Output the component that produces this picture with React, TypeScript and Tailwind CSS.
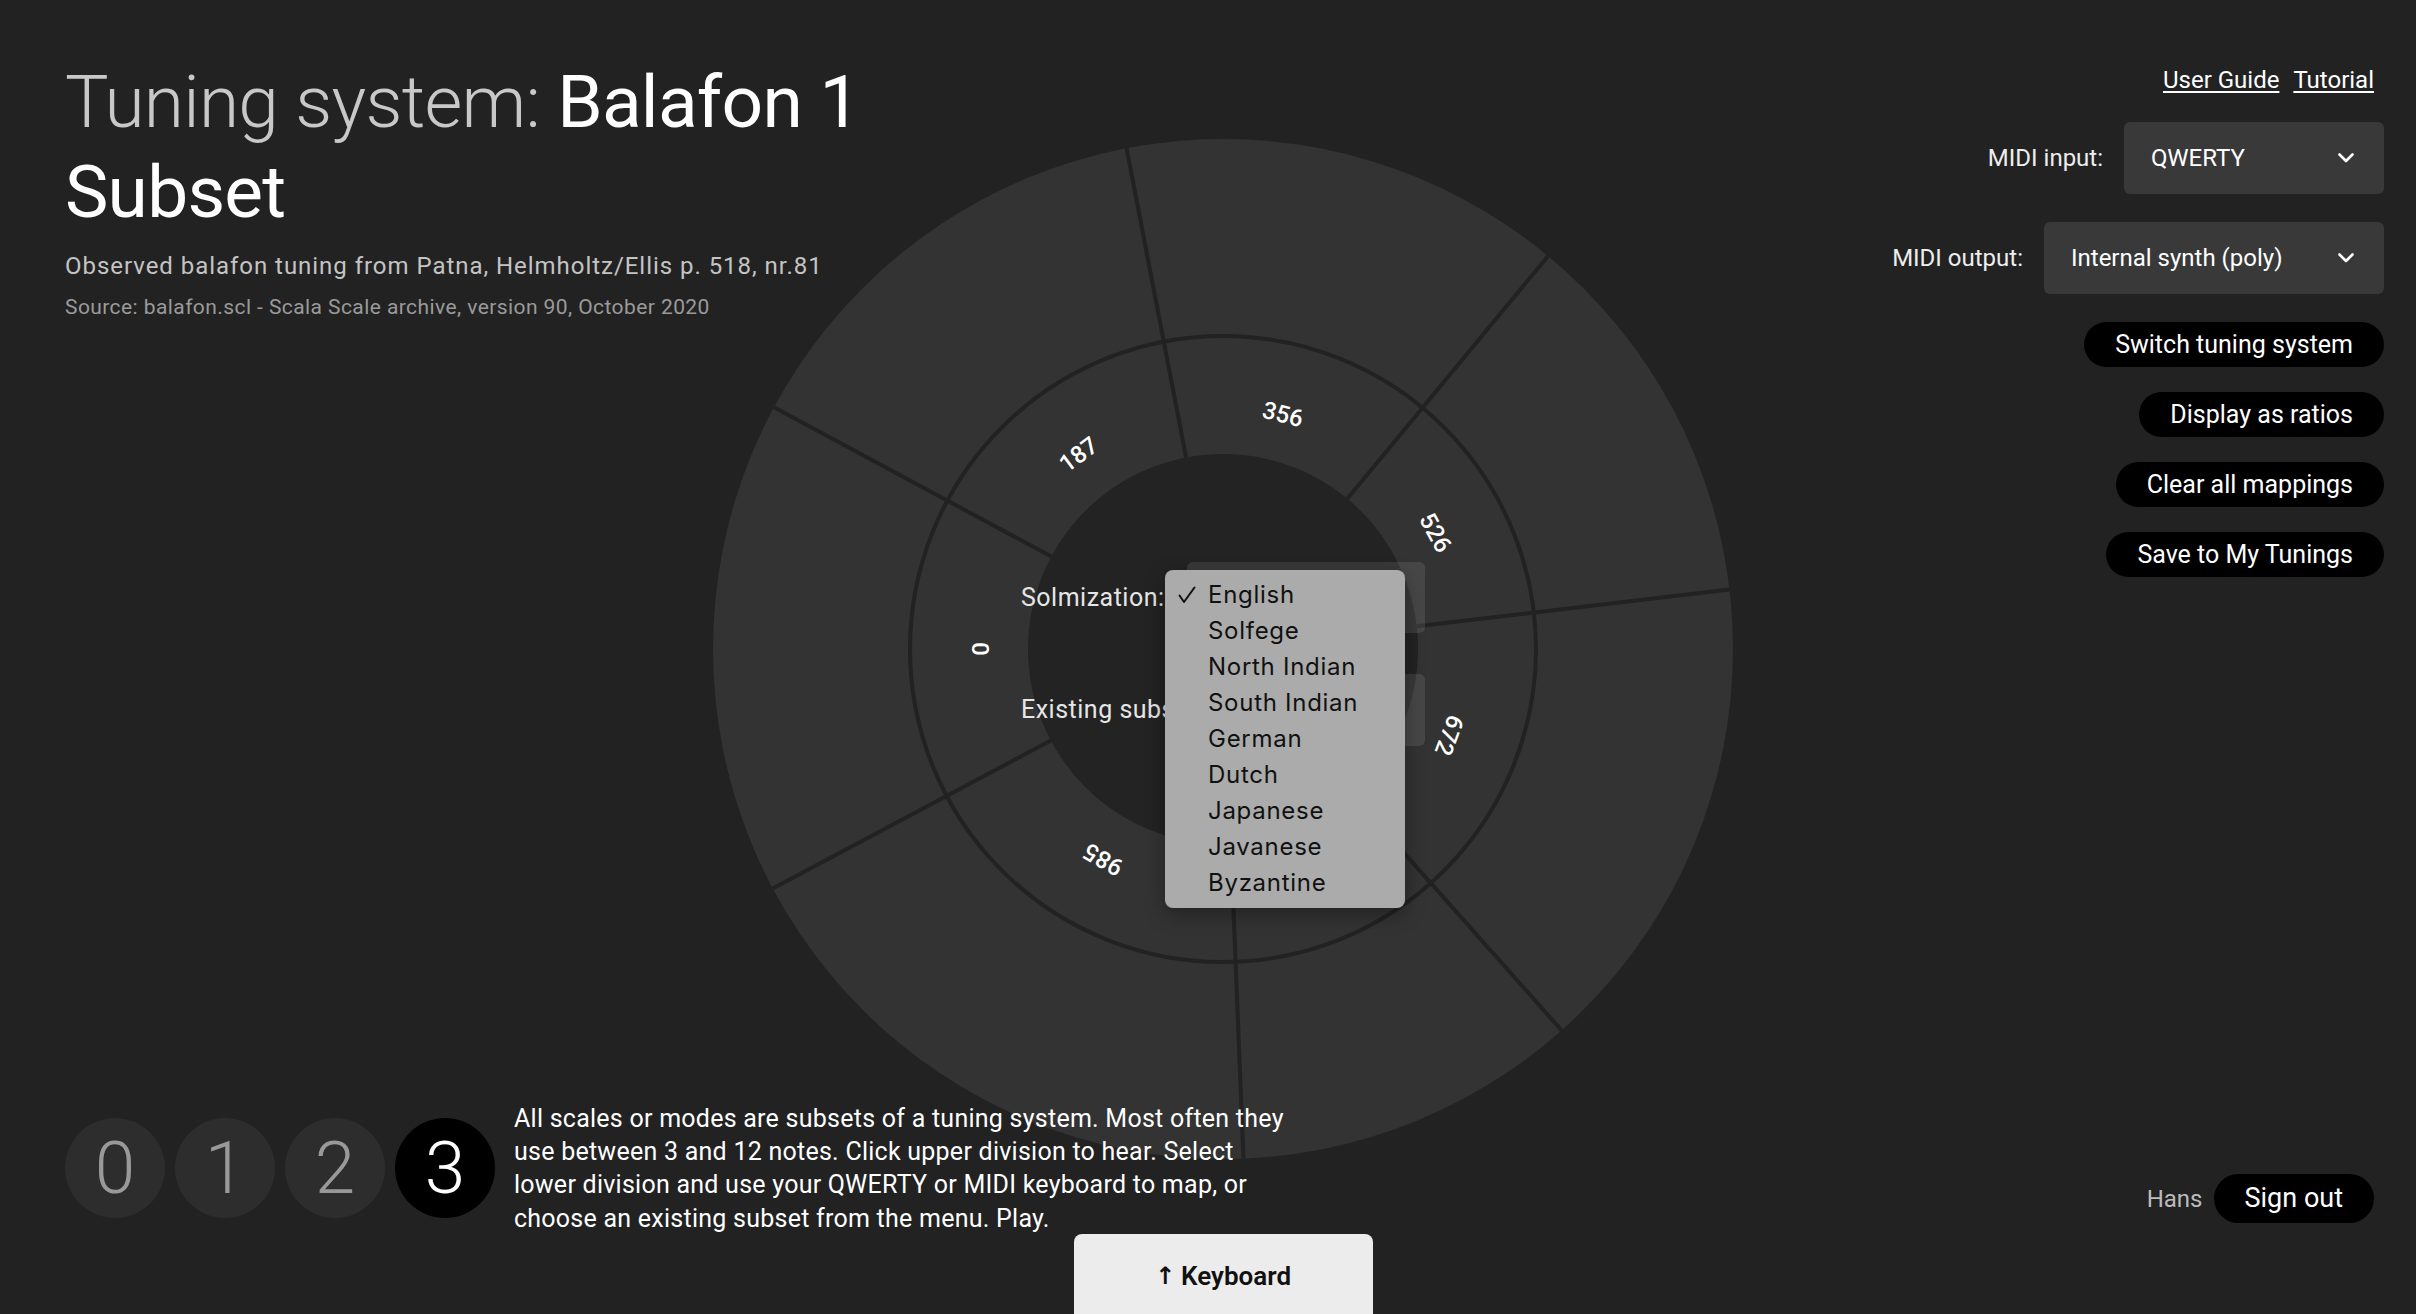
import React from 'react';

const CX = 510;
const CY = 510;
const R_OUTER = 510;
const R_MID = 313;
const R_INNER = 195;
const R_LABEL = 242;

// angles measured clockwise from 9 o'clock
const boundaries = [28.3, 79.1, 129.6, 173.3, 228.4, 267.7, 332];
const notes = [
	{ label: '0', angle: 0 },
	{ label: '187', angle: 53.4 },
	{ label: '356', angle: 104.3 },
	{ label: '526', angle: 151.3 },
	{ label: '672', angle: 200.9 },
	{ label: '856', angle: 250 },
	{ label: '985', angle: 299.6 },
];

const solmizations = [
	'English',
	'Solfege',
	'North Indian',
	'South Indian',
	'German',
	'Dutch',
	'Japanese',
	'Javanese',
	'Byzantine',
];

const polar = (deg: number, r: number) => {
	const rad = (deg * Math.PI) / 180;
	return { x: CX - r * Math.cos(rad), y: CY - r * Math.sin(rad) };
};

const Chevron = () => (
	<svg width="16" height="10" viewBox="0 0 16 10" fill="none">
		<path d="M1.5 1.5 8 8l6.5-6.5" stroke="white" strokeWidth="2.6" strokeLinecap="round" strokeLinejoin="round" />
	</svg>
);

const Check = () => (
	<svg width="18" height="18" viewBox="0 0 18 18" fill="none">
		<path d="M1.5 9.5 6 16 16.5 1.5" stroke="#111" strokeWidth="2" strokeLinecap="round" strokeLinejoin="round" />
	</svg>
);

const SolmizationMenu = () => (
	<div className="absolute left-[-22px] top-[8px] z-10 w-[240px] rounded-[8px] bg-[#ababab] py-[7px] shadow-[0_6px_20px_rgba(0,0,0,0.35)] [font-family:Inter,sans-serif]">
		{solmizations.map((item, i) => (
			<div key={item} className="flex h-[36px] items-center pl-[13px] text-[24px] tracking-[0.03em] text-[#111]">
				<span className="flex w-[30px] items-center">{i === 0 && <Check />}</span>
				{item}
			</div>
		))}
	</div>
);

const Wheel = () => (
	<div className="relative h-[1020px] w-[1020px]">
		<svg width="1020" height="1020" viewBox="0 0 1020 1020">
			<circle cx={CX} cy={CY} r={R_OUTER} fill="#333333" />
			<circle cx={CX} cy={CY} r={R_MID} fill="none" stroke="#222222" strokeWidth="4" />
			{boundaries.map((a) => {
				const p1 = polar(a, R_INNER);
				const p2 = polar(a, R_OUTER);
				return <line key={a} x1={p1.x} y1={p1.y} x2={p2.x} y2={p2.y} stroke="#222222" strokeWidth="4" />;
			})}
			<circle cx={CX} cy={CY} r={R_INNER} fill="#232323" />
			{notes.map((n) => {
				const p = polar(n.angle, R_LABEL);
				return (
					<text
						key={n.label}
						transform={`translate(${p.x} ${p.y}) rotate(${n.angle - 90})`}
						textAnchor="middle"
						dominantBaseline="central"
						fill="white"
						fontSize="24"
						fontWeight="500"
					>
						{n.label}
					</text>
				);
			})}
		</svg>

		{/* controls in the middle of the wheel */}
		<div className="absolute inset-0 flex items-center justify-center pt-[10px]">
			<div className="flex flex-col gap-[41px]">
				<div className="flex items-center">
					<span className="w-[166px] whitespace-nowrap text-[25px] tracking-[0.02em] text-[#e6e6e6]">Solmization:</span>
					<div className="relative h-[71px] w-[238px] rounded-[6px] bg-white/10">
						<SolmizationMenu />
					</div>
				</div>
				<div className="flex items-center">
					<span className="w-[166px] whitespace-nowrap text-[25px] tracking-[0.02em] text-[#e6e6e6]">Existing subsets:</span>
					<div className="h-[72px] w-[238px] rounded-[6px] bg-white/10" />
				</div>
			</div>
		</div>
	</div>
);

const MidiSelect = ({ label, value, width }: { label: string; value: string; width: string }) => (
	<div className="flex items-center gap-[21px]">
		<span className="text-[24px] text-[#eeeeee]">{label}</span>
		<div className={`flex h-[72px] items-center justify-between rounded-[6px] bg-[#393939] pl-[27px] pr-[30px] text-[24px] text-white ${width}`}>
			<span>{value}</span>
			<Chevron />
		</div>
	</div>
);

const PillButton = ({ children }: { children: React.ReactNode }) => (
	<button className="flex h-[45px] items-center rounded-full bg-black px-[31px] text-[25px] text-white">{children}</button>
);

const App = () => {
	return (
		<div className="grid h-screen w-full grid-cols-1 grid-rows-1 overflow-hidden bg-[#222222] [font-family:Roboto,sans-serif]">
			{/* wheel layer */}
			<div className="col-start-1 row-start-1 flex items-center justify-center pb-[16px] pl-[30px]">
				<Wheel />
			</div>

			{/* page content */}
			<div className="relative col-start-1 row-start-1 flex flex-col justify-between pb-[79px] pl-[65px] pr-[32px] pt-[57px]">
				<div className="flex items-start justify-between">
					<div>
						<h1 className="text-[73px] leading-[90px] tracking-[-0.01em]">
							<span className="font-light text-[#c8c8c8]">Tuning system: </span>
							<span className="text-white">
								Balafon 1
								<br />
								Subset
							</span>
						</h1>
						<p className="mt-[14px] text-[24px] leading-[30px] tracking-[0.04em] text-[#c4c4c4]">
							Observed balafon tuning from Patna, Helmholtz/Ellis p. 518, nr.81
						</p>
						<p className="mt-[12px] text-[21px] leading-[28px] tracking-[0.02em] text-[#9a9a9a]">
							Source: balafon.scl - Scala Scale archive, version 90, October 2020
						</p>
					</div>

					<div className="flex flex-col items-end">
						<div className="mr-[10px] mt-[7px] flex gap-[14px] text-[24px] leading-[32px] text-white">
							<a className="underline underline-offset-[3px]">User Guide</a>
							<a className="underline underline-offset-[3px]">Tutorial</a>
						</div>
						<div className="mt-[26px] flex flex-col items-end gap-[28px]">
							<MidiSelect label="MIDI input:" value="QWERTY" width="w-[260px]" />
							<MidiSelect label="MIDI output:" value="Internal synth (poly)" width="w-[340px]" />
						</div>
						<div className="mt-[28px] flex flex-col items-end gap-[25px]">
							<PillButton>Switch tuning system</PillButton>
							<PillButton>Display as ratios</PillButton>
							<PillButton>Clear all mappings</PillButton>
							<PillButton>Save to My Tunings</PillButton>
						</div>
					</div>
				</div>

				<div className="flex items-end justify-between">
					<div className="flex items-center gap-[19px]">
						<div className="flex gap-[10px]">
							{['0', '1', '2', '3'].map((step) => (
								<div
									key={step}
									className={
										step === '3'
											? 'flex h-[100px] w-[100px] items-center justify-center rounded-full bg-black text-[73px] font-light leading-none text-white'
											: 'flex h-[100px] w-[100px] items-center justify-center rounded-full bg-[#2d2d2d] text-[73px] font-light leading-none text-[#999999]'
									}
								>
									{step}
								</div>
							))}
						</div>
						<p className="text-[25px] leading-[33.3px] tracking-[0.01em] text-white">
							All scales or modes are subsets of a tuning system. Most often they
							<br />
							use between 3 and 12 notes. Click upper division to hear. Select
							<br />
							lower division and use your QWERTY or MIDI keyboard to map, or
							<br />
							choose an existing subset from the menu. Play.
						</p>
					</div>

					<div className="mb-[12px] mr-[10px] flex items-center gap-[11px]">
						<span className="text-[24px] text-[#bbbbbb]">Hans</span>
						<button className="flex h-[49px] items-center rounded-full bg-black px-[31px] text-[27px] text-white">
							Sign out
						</button>
					</div>
				</div>
			</div>

			{/* keyboard drawer tab */}
			<div className="relative col-start-1 row-start-1 flex items-end justify-center pl-[30px]">
				<div className="flex h-[80px] w-[299px] items-center justify-center gap-[6px] rounded-t-[8px] bg-[#ececec] pt-[4px] text-[26px] font-semibold text-[#111111]">
					<span className="[font-family:'DejaVu_Sans',sans-serif] text-[24px] font-bold">↑</span>
					<span>Keyboard</span>
				</div>
			</div>
		</div>
	);
};

export default App;
